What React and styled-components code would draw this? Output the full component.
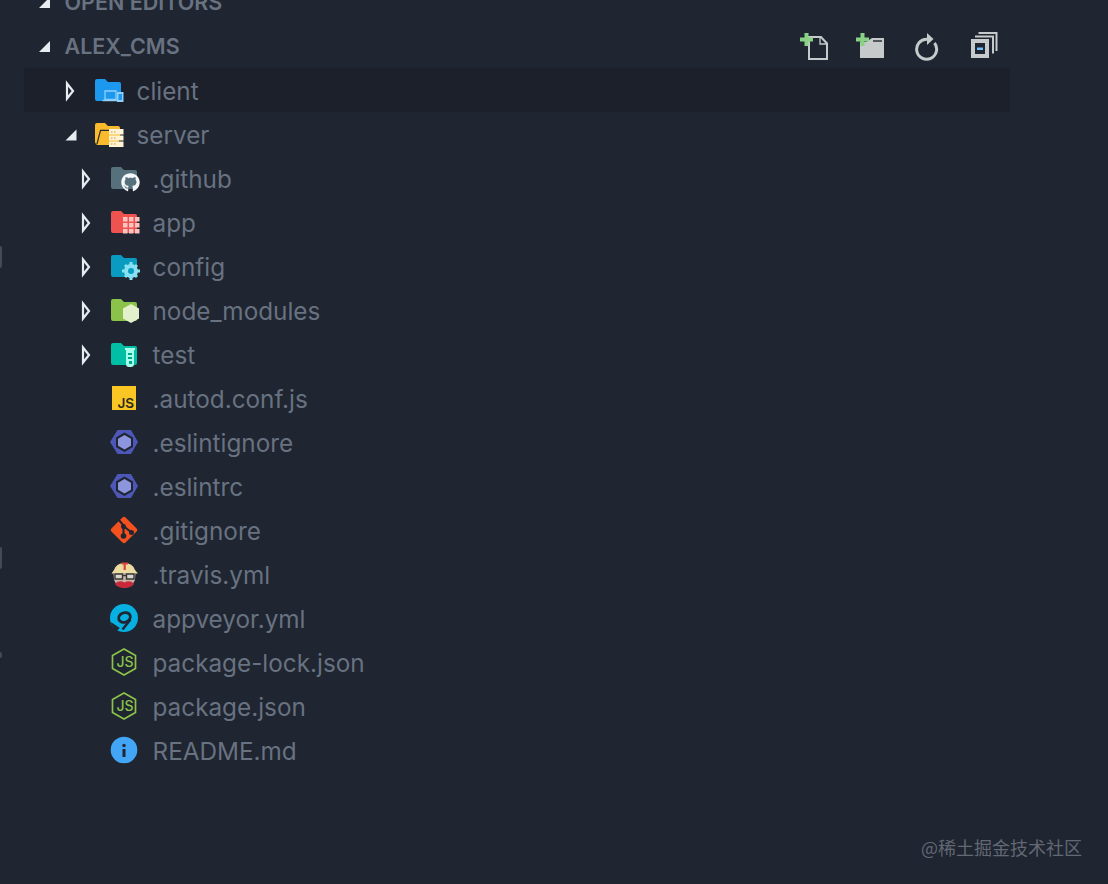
import React from "react";
import styled, { createGlobalStyle } from "styled-components";
import { FaGithub } from "react-icons/fa";

const Global = createGlobalStyle`
  html, body { margin: 0; padding: 0; background: #1f2531; }
  #root { height: 884px; }
`;

const Page = styled.div`
  position: relative;
  width: 1108px;
  height: 884px;
  overflow: hidden;
  background: #1f2531;
  font-family: Inter, "Noto Sans", sans-serif;
`;

const Tree = styled.div`
  display: flex;
  flex-direction: column;
  margin-top: -19px;
`;

const Section = styled.div`
  box-sizing: border-box;
  display: flex;
  align-items: center;
  height: 44px;
  padding: 0 108px 2px 39px;
  color: #687280;
  font-size: 21.5px;
  font-weight: 600;
`;

const SectionTitle = styled.span`
  flex: 1;
  margin-left: 15px;
  margin-left: 14.5px;
`;

const Toolbar = styled.div`
  display: flex;
  gap: 27px;
`;

const ToolIcon = styled.svg`
  width: 30px;
  height: 30px;
  display: block;
`;

const Row = styled.div`
  box-sizing: border-box;
  display: flex;
  align-items: center;
  height: 44px;
  margin: ${(p) => (p.$selected ? "-1px 98px 1px 24px" : "0")};
  padding-top: ${(p) => (p.$selected ? 2 : 0)}px;
  padding-left: ${(p) => (p.$selected ? 40 : 64) + p.$depth * 16}px;
  background: ${(p) => (p.$selected ? "#1b202b" : "transparent")};
  color: #687280;
  font-size: 24.3px;
  white-space: nowrap;
`;

const Twisty = styled.svg`
  width: 30px;
  height: 30px;
  flex: none;
  display: block;
`;

const TwistySlot = styled.div`
  width: 30px;
  height: 30px;
  flex: none;
`;

const Icon = styled.svg`
  width: 30px;
  height: 30px;
  flex: none;
  display: block;
`;

const Label = styled.span`
  margin-left: 12.5px;
  line-height: 42px;
`;

const Watermark = styled.div`
  position: absolute;
  left: 921px;
  top: 835px;
  color: #626874;
  font: 18px/24px "Noto Sans CJK SC", sans-serif;
  white-space: nowrap;
`;

const EdgeMark = styled.div`
  position: absolute;
  left: 0;
  top: ${(p) => p.$top}px;
  width: 2px;
  height: ${(p) => p.$h}px;
  border-radius: 0 3px 3px 0;
  background: #444a56;
`;

const Open = () => (
  <Twisty viewBox="0 0 30 30">
    <path d="M3 7.500l6 7.500-6 7.500z" fill="none" stroke="#e8ebef" strokeWidth="2.200" />
  </Twisty>
);

const Down = () => (
  <Twisty viewBox="0 0 30 30">
    <path d="M12.500 9.500v11h-11z" fill="#e8ebef" />
  </Twisty>
);

const SmallDown = styled.svg`
  width: 11px;
  height: 11px;
  flex: none;
  display: block;
`;

const folderPath = "M1 5a2 2 0 0 1 2-2h8l3 3h11a2 2 0 0 1 2 2v15a2 2 0 0 1-2 2H3a2 2 0 0 1-2-2z";

const Folder = ({ color, children }) => (
  <Icon viewBox="0 0 30 30">
    <path d={folderPath} fill={color} />
    {children}
  </Icon>
);

const ClientIcon = () => (
  <Folder color="#1c98ee">
    <path d="M11 15h11v8.500H11z" fill="#1c98ee" stroke="#8fd0fa" strokeWidth="1.300" />
    <path d="M8.500 24.500h15" stroke="#8fd0fa" strokeWidth="1.500" />
    <path d="M23 16h6.500v10H23z" fill="#8fd0fa" />
    <path d="M24.500 18h3.500v6h-3.500z" fill="#1c98ee" />
  </Folder>
);

const ServerIcon = () => (
  <Icon viewBox="0 0 30 30">
    <path d="M1 5a2 2 0 0 1 2-2h8l3 3h10a2 2 0 0 1 2 2v2H7l-3.500 14H3a2 2 0 0 1-2-2z" fill="#f9bb2d" />
    <path d="M6 11h21l-3 14H2.500z" fill="#f9bb2d" />
    <path d="M3 24 6.500 10.300H15" stroke="#2a2a28" strokeWidth="1.200" fill="none" />
    <path d="M15 9h14.500v5.500H15zM15 15.500h14.500v5H15zM15 21.500h14.500v5.500H15z" fill="#fff3d4" />
    <path d="M17 12h1.500M20 12h1.500M17 18h1.500M20 18h1.500M17 24h1.500M20 24h1.500" stroke="#c8963a" strokeWidth="1.200" />
  </Icon>
);

const GithubIcon = () => (
  <Folder color="#56707c">
    <FaGithub x="11" y="9" size="19" color="#f4f7f8" />
  </Folder>
);

const AppIcon = () => (
  <Folder color="#ef5350">
    {[9, 15, 21].map((y) =>
      [13, 19, 25].map((x) => <rect key={`${x}-${y}`} x={x} y={y} width="4.500" height="4.500" fill="#ffc4c0" />)
    )}
  </Folder>
);

const ConfigIcon = () => (
  <Folder color="#0a9cc0">
    <circle cx="21" cy="19" r="5" fill="none" stroke="#86e2f2" strokeWidth="4" />
    <path d="M21 10v4M21 24v4M12 19h4M26 19h4M15 13l3 3M24 22l3 3M15 25l3-3M24 16l3-3" stroke="#86e2f2" strokeWidth="3" />
  </Folder>
);

const NodeIcon = () => (
  <Folder color="#8bc34a">
    <path d="M21 8l8 4.500v10L21 27l-8-4.500v-10z" fill="#e2f0cb" />
  </Folder>
);

const TestIcon = () => (
  <Folder color="#00bfa5">
    <path d="M15 8h10v2h-1v14a3 3 0 0 1-3 3h-2a3 3 0 0 1-3-3V10h-1z" fill="#a7ffeb" />
    <path d="M18 13h4v2h-4zM18 17h4v2h-4zM19 21h3v3h-3z" fill="#00a58e" />
  </Folder>
);

const JsIcon = () => (
  <Icon viewBox="0 0 30 30">
    <rect x="2" y="2" width="24" height="24" fill="#f9c623" />
    <text x="7.500" y="23.500" fontFamily="Inter, sans-serif" fontSize="13.500" fontWeight="600" fill="#2a2a20">JS</text>
  </Icon>
);

const EslintIcon = () => (
  <Icon viewBox="0 0 30 30">
    <path d="M7.500 2h13.500L28 14l-7 12H7.500L0 14z" fill="#4d57b8" />
    <path d="M14.500 4.500l8.500 5v9.500l-8.500 5-8.500-5v-9.500z" fill="#1f2531" />
    <path d="M14.500 7l6.500 3.700v7.100l-6.500 3.700-6.500-3.700v-7.100z" fill="#8d96dc" />
  </Icon>
);

const GitIcon = () => (
  <Icon viewBox="0 0 30 30">
    <rect x="4" y="4" width="20" height="20" rx="2.500" fill="#f4511e" transform="rotate(45 14 14)" />
    <path d="M8 3l6 7M13.500 10v10M13.500 10l8 6.500" stroke="#1f2531" strokeWidth="2" fill="none" />
    <circle cx="13.500" cy="10.500" r="2.500" fill="#1f2531" />
    <circle cx="13.500" cy="20" r="2.800" fill="#1f2531" />
    <circle cx="21.500" cy="16.500" r="2.500" fill="#1f2531" />
  </Icon>
);

const TravisIcon = () => (
  <Icon viewBox="0 0 30 30">
    <path d="M4 10a11 10 0 0 1 21 0l3 3.500H1.500z" fill="#ecdca0" />
    <path d="M11.500 2.500h6.500v2h-2.200V10h-2.200V4.500h-2.100z" fill="#d9453f" />
    <path d="M3.500 13h22l-.5 7-3 5.500-7.500 2.500-7.500-2.500-3-5.500z" fill="#c9b4a4" />
    <path d="M5 14h7.500v5H5zM16.500 14H24v5h-7.500z" fill="#d8d6cc" stroke="#3a3836" strokeWidth="1.400" />
    <path d="M12.500 15.500h4" stroke="#3a3836" strokeWidth="1.400" />
    <path d="M5 24c3-3.500 6.500-3 9.500-1.500 3-1.500 6.500-2 9.500 1.500-2 2.500-5 4-9.500 4S7 26.500 5 24z" fill="#c8283c" />
  </Icon>
);

const AppveyorIcon = () => (
  <Icon viewBox="0 0 30 30">
    <circle cx="14" cy="14" r="14" fill="#06b1e2" />
    <ellipse cx="14.500" cy="13.500" rx="6" ry="4.800" fill="none" stroke="#1f2531" strokeWidth="2.800" transform="rotate(-20 14.500 13.500)" />
    <path d="M20.500 15.500l-8 10" stroke="#1f2531" strokeWidth="2.500" />
    <path d="M0.800 18l9 6-3 2.800C4 25.500 2 22 0.800 18z" fill="#1f2531" />
  </Icon>
);

const NodeFileIcon = () => (
  <Icon viewBox="0 0 30 30">
    <path d="M14 1l11.500 6.500v13L14 27 2.500 20.500v-13z" fill="none" stroke="#8bc34a" strokeWidth="1.700" />
    <text x="6.500" y="19" fontFamily="Inter, sans-serif" fontSize="14" fontWeight="500" fill="#8bc34a">JS</text>
  </Icon>
);

const InfoIcon = () => (
  <Icon viewBox="0 0 30 30">
    <circle cx="14" cy="14" r="13.300" fill="#42a5f5" />
    <circle cx="14" cy="9.500" r="1.700" fill="#1f2531" />
    <rect x="12.500" y="13" width="3" height="8" fill="#1f2531" />
  </Icon>
);

const plus = "M4.500 2h4v4.500H13v4H8.500V15h-4v-4.500H0v-4h4.500z";

const NewFile = () => (
  <ToolIcon viewBox="0 0 30 30">
    <path d="M10 6h12l6 6.500V28H10z" fill="none" stroke="#c6cacb" strokeWidth="2" />
    <path d="M21 6v7h7" fill="none" stroke="#c6cacb" strokeWidth="1.300" />
    <path d={plus} fill="#89d185" transform="translate(1 0)" />
  </ToolIcon>
);

const NewFolder = () => (
  <ToolIcon viewBox="0 0 30 30">
    <path d="M4 11h6l6-4h12v20H4z" fill="#c6cacb" />
    <path d="M17 10h9" stroke="#1f2531" strokeWidth="1.400" />
    <path d={plus} fill="#89d185" />
  </ToolIcon>
);

const Refresh = () => (
  <ToolIcon viewBox="0 0 30 30">
    <path d="M14 8.200A10 10 0 1 0 21.500 12" fill="none" stroke="#c6cacb" strokeWidth="3" />
    <path d="M14 2l6.500 6-6.500 6z" fill="#c6cacb" />
  </ToolIcon>
);

const Collapse = () => (
  <ToolIcon viewBox="0 0 30 30">
    <path d="M8.500 2h18v18" fill="none" stroke="#c6cacb" strokeWidth="2" />
    <path d="M5 5.500h18v17" fill="none" stroke="#c6cacb" strokeWidth="2" />
    <rect x="1" y="8" width="18" height="19" fill="#c6cacb" />
    <rect x="5" y="12" width="10" height="11" fill="#1f2531" />
    <rect x="7" y="16.500" width="6" height="2.500" fill="#75beff" />
  </ToolIcon>
);

const rows = [
  { depth: 0, name: "client", twisty: "open", icon: ClientIcon, selected: true },
  { depth: 0, name: "server", twisty: "down", icon: ServerIcon },
  { depth: 1, name: ".github", twisty: "open", icon: GithubIcon },
  { depth: 1, name: "app", twisty: "open", icon: AppIcon },
  { depth: 1, name: "config", twisty: "open", icon: ConfigIcon },
  { depth: 1, name: "node_modules", twisty: "open", icon: NodeIcon },
  { depth: 1, name: "test", twisty: "open", icon: TestIcon },
  { depth: 1, name: ".autod.conf.js", icon: JsIcon },
  { depth: 1, name: ".eslintignore", icon: EslintIcon },
  { depth: 1, name: ".eslintrc", icon: EslintIcon },
  { depth: 1, name: ".gitignore", icon: GitIcon },
  { depth: 1, name: ".travis.yml", icon: TravisIcon },
  { depth: 1, name: "appveyor.yml", icon: AppveyorIcon },
  { depth: 1, name: "package-lock.json", icon: NodeFileIcon },
  { depth: 1, name: "package.json", icon: NodeFileIcon },
  { depth: 1, name: "README.md", icon: InfoIcon },
];

const SectionArrow = () => (
  <SmallDown viewBox="0 0 11 11">
    <path d="M11 0v11H0z" fill="#e8ebef" />
  </SmallDown>
);

export default function App() {
  return (
    <Page>
      <Global />
      <Tree>
        <Section>
          <SectionArrow />
          <SectionTitle>OPEN EDITORS</SectionTitle>
        </Section>
        <Section>
          <SectionArrow />
          <SectionTitle>ALEX_CMS</SectionTitle>
          <Toolbar>
            <NewFile />
            <NewFolder />
            <Refresh />
            <Collapse />
          </Toolbar>
        </Section>
        {rows.map((r) => {
          const I = r.icon;
          return (
            <Row key={r.name} $depth={r.depth} $selected={r.selected}>
              {r.twisty === "open" ? <Open /> : r.twisty === "down" ? <Down /> : <TwistySlot />}
              <I />
              <Label>{r.name}</Label>
            </Row>
          );
        })}
      </Tree>
      <EdgeMark $top={246} $h={22} />
      <EdgeMark $top={547} $h={22} />
      <EdgeMark $top={652} $h={6} />
      <Watermark>@稀土掘金技术社区</Watermark>
    </Page>
  );
}
